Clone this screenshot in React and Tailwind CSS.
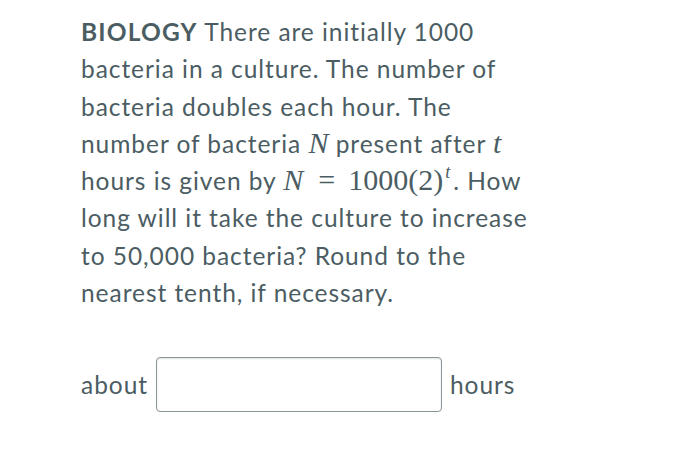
export default function App() {
  const m = { fontFamily: '"Liberation Serif", "Times New Roman", serif', letterSpacing: 0 };
  return (
    <div className="w-[700px] h-[465px] bg-white text-[#4b5d63]">
      <div className="pl-[81px] pt-[13px] text-[24.5px] leading-[37.3px] tracking-[0.95px]" style={{ fontFamily: 'Lato, "Noto Sans", sans-serif' }}>
        <div><span className="font-bold tracking-[1.2px]">BIOLOGY</span> There are initially 1000</div>
        <div>bacteria in a culture. The number of</div>
        <div>bacteria doubles each hour. The</div>
        <div>number of bacteria <span className="italic text-[30px] leading-[0]" style={m}>N</span> present after <span className="italic text-[30px] leading-[0]" style={m}>t</span></div>
        <div>hours is given by <span className="text-[30px] leading-[0]" style={m}><i>N</i><span className="ml-[15px] mr-[13px]">=</span>1000(2)<sup className="italic text-[18px] relative top-[-12px] ml-[2px] mr-[3px]">t</sup></span>. How</div>
        <div>long will it take the culture to increase</div>
        <div>to 50,000 bacteria? Round to the</div>
        <div>nearest tenth, if necessary.</div>
        <div className="flex items-center mt-[46px]">
          <span>about</span>
          <div className="ml-[8px] mr-[8px] w-[286px] h-[55px] rounded-[4px] border border-[#8b969b] shadow-[inset_0_1px_2px_rgba(0,0,0,0.12)]"></div>
          <span>hours</span>
        </div>
      </div>
    </div>
  );
}
